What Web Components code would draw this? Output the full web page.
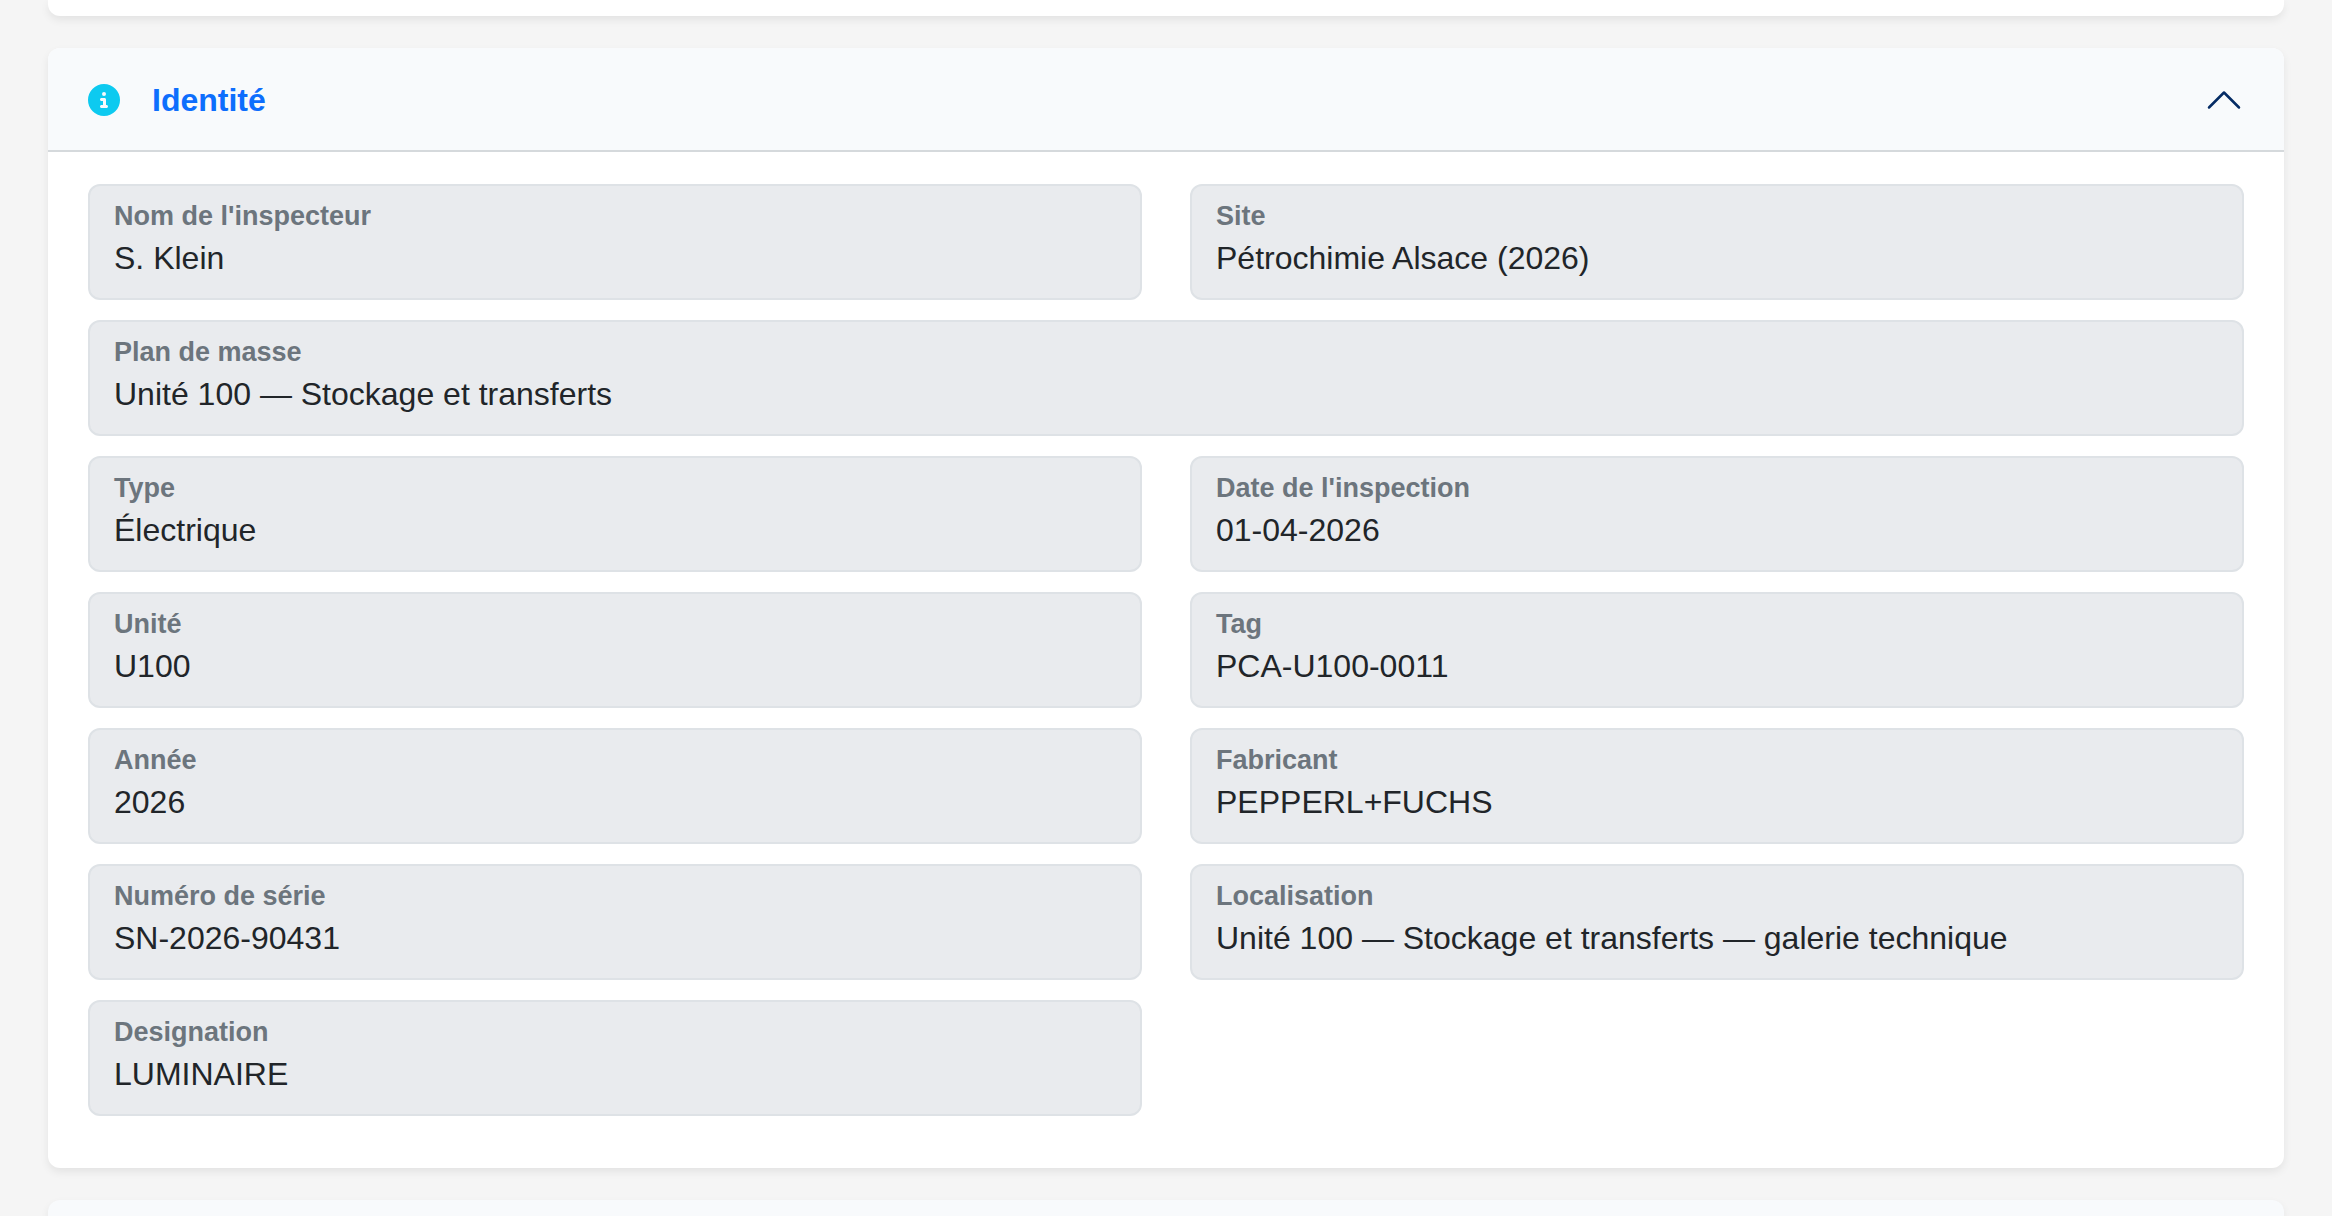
<!DOCTYPE html>
<html lang="fr">
<head>
<meta charset="utf-8">
<meta name="viewport" content="width=device-width, initial-scale=1">
<title>Fiche d'inspection</title>
<style>
  body {
    margin: 0;
    background: #f5f5f5;
    color: #212529;
    font-family: "Liberation Sans", Arial, sans-serif;
    font-size: 32px;
    line-height: 48px;
  }
</style>
</head>
<body>
<inspection-page>
  <panel-edge side="bottom"></panel-edge>
  <accordion-card heading="Identité">
    <info-field label="Nom de l'inspecteur">S. Klein</info-field>
    <info-field label="Site">Pétrochimie Alsace (2026)</info-field>
    <info-field label="Plan de masse" wide>Unité 100 — Stockage et transferts</info-field>
    <info-field label="Type">Électrique</info-field>
    <info-field label="Date de l'inspection">01-04-2026</info-field>
    <info-field label="Unité">U100</info-field>
    <info-field label="Tag">PCA-U100-0011</info-field>
    <info-field label="Année">2026</info-field>
    <info-field label="Fabricant">PEPPERL+FUCHS</info-field>
    <info-field label="Numéro de série">SN-2026-90431</info-field>
    <info-field label="Localisation">Unité 100 — Stockage et transferts — galerie technique</info-field>
    <info-field label="Designation">LUMINAIRE</info-field>
  </accordion-card>
  <panel-edge side="top"></panel-edge>
</inspection-page>

<script>
class InspectionPage extends HTMLElement {
  constructor() {
    super();
    this.attachShadow({ mode: "open" }).innerHTML = `
      <style>
        :host { display: block; }
        main { display: flex; flex-direction: column; gap: 32px; padding: 0 48px; }
      </style>
      <main><slot></slot></main>`;
  }
}

/* The visible end of a neighbouring panel. */
class PanelEdge extends HTMLElement {
  constructor() {
    super();
    this.attachShadow({ mode: "open" }).innerHTML = `
      <style>
        :host { display: block; height: 16px; box-shadow: 0 4px 8px rgba(0, 0, 0, .075); }
        :host([side="bottom"]) { background: #fff; border-radius: 0 0 12px 12px; }
        :host([side="top"]) { background: #f8fafc; border-radius: 12px 12px 0 0; }
      </style>`;
  }
}

class InfoIcon extends HTMLElement {
  constructor() {
    super();
    this.attachShadow({ mode: "open" }).innerHTML = `
      <style>
        :host { display: block; width: 32px; height: 32px; color: #0dcaf0; }
        svg { display: block; width: 100%; height: 100%; }
      </style>
      <svg viewBox="0 0 512 512" fill="currentColor" aria-hidden="true">
        <path d="M256 512A256 256 0 1 0 256 0a256 256 0 1 0 0 512zM216 336h24V272H216c-13.3 0-24-10.700-24-24s10.700-24 24-24h48c13.300 0 24 10.700 24 24v88h8c13.300 0 24 10.700 24 24s-10.700 24-24 24H216c-13.300 0-24-10.700-24-24s10.700-24 24-24zm40-208a32 32 0 1 1 0 64 32 32 0 1 1 0-64z"/>
      </svg>`;
  }
}

class AccordionCard extends HTMLElement {
  constructor() {
    super();
    this.attachShadow({ mode: "open" }).innerHTML = `
      <style>
        :host { display: block; background: #fff; border-radius: 12px; box-shadow: 0 4px 8px rgba(0, 0, 0, .075); }
        h2 { margin: 0; font: inherit; }
        button {
          display: flex; align-items: center; gap: 32px; box-sizing: border-box;
          width: 100%; height: 104px; margin: 0; padding: 0 40px; border: 0;
          border-radius: 12px 12px 0 0; background: #f8fafc;
          box-shadow: inset 0 -2px 0 #d5d9dc;
          color: #0d6efd; font: inherit; font-weight: 700; text-align: left; cursor: pointer;
        }
        .title { flex: 1; }
        .chevron { width: 40px; height: 40px; color: #052c65; transform: rotate(180deg); }
        button[aria-expanded="false"] { border-radius: 12px; box-shadow: none; }
        button[aria-expanded="false"] .chevron { transform: none; }
        .body { display: grid; grid-template-columns: 1fr 1fr; gap: 20px 48px; padding: 32px 40px 52px; }
        .body[hidden] { display: none; }
      </style>
      <h2>
        <button type="button" aria-expanded="true" aria-controls="body">
          <info-icon></info-icon>
          <span class="title"></span>
          <svg class="chevron" viewBox="0 0 16 16" fill="none" stroke="currentColor" stroke-linecap="round" stroke-linejoin="round" aria-hidden="true">
            <path d="m2 5 6 6 6-6"/>
          </svg>
        </button>
      </h2>
      <div class="body" id="body"><slot></slot></div>`;
    const button = this.shadowRoot.querySelector("button");
    const body = this.shadowRoot.querySelector(".body");
    button.addEventListener("click", () => {
      body.hidden = !body.hidden;
      button.setAttribute("aria-expanded", String(!body.hidden));
    });
  }
  connectedCallback() {
    this.shadowRoot.querySelector(".title").textContent = this.getAttribute("heading");
  }
}

class InfoField extends HTMLElement {
  constructor() {
    super();
    this.attachShadow({ mode: "open" }).innerHTML = `
      <style>
        :host { display: block; min-width: 0; }
        :host([wide]) { grid-column: 1 / -1; }
        dl {
          display: flex; flex-direction: column; gap: 4px; margin: 0; padding: 16px 24px;
          border: 2px solid #dee2e6; border-radius: 12px; background: #e9ebee;
        }
        dt { color: #6c757d; font-size: 27px; line-height: 28px; font-weight: 700; }
        dd { margin: 0; }
      </style>
      <dl><dt></dt><dd><slot></slot></dd></dl>`;
  }
  connectedCallback() {
    this.shadowRoot.querySelector("dt").textContent = this.getAttribute("label");
  }
}

customElements.define("inspection-page", InspectionPage);
customElements.define("panel-edge", PanelEdge);
customElements.define("info-icon", InfoIcon);
customElements.define("info-field", InfoField);
customElements.define("accordion-card", AccordionCard);
</script>
</body>
</html>
